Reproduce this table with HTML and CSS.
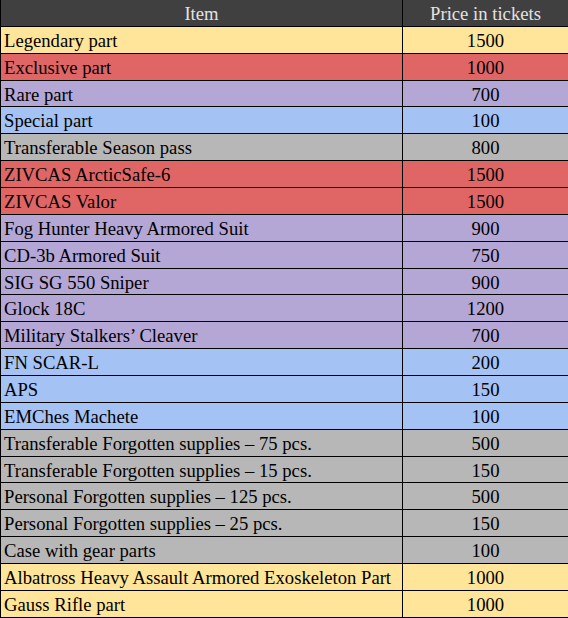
FILE: index.html
```html
<!DOCTYPE html>
<html>
<head>
<meta charset="utf-8">
<link rel="stylesheet" href="styles.css">
</head>
<body>
<table class="prices">
  <colgroup><col class="c-item"><col class="c-price"></colgroup>
  <thead>
    <tr><th>Item</th><th>Price in tickets</th></tr>
  </thead>
  <tbody>
    <tr class="yellow"><td>Legendary part</td><td>1500</td></tr>
    <tr class="red"><td>Exclusive part</td><td>1000</td></tr>
    <tr class="purple"><td>Rare part</td><td>700</td></tr>
    <tr class="blue"><td>Special part</td><td>100</td></tr>
    <tr class="gray"><td>Transferable Season pass</td><td>800</td></tr>
    <tr class="red"><td>ZIVCAS ArcticSafe-6</td><td>1500</td></tr>
    <tr class="red"><td>ZIVCAS Valor</td><td>1500</td></tr>
    <tr class="purple"><td>Fog Hunter Heavy Armored Suit</td><td>900</td></tr>
    <tr class="purple"><td>CD-3b Armored Suit</td><td>750</td></tr>
    <tr class="purple"><td>SIG SG 550 Sniper</td><td>900</td></tr>
    <tr class="purple"><td>Glock 18C</td><td>1200</td></tr>
    <tr class="purple"><td>Military Stalkers’ Cleaver</td><td>700</td></tr>
    <tr class="blue"><td>FN SCAR-L</td><td>200</td></tr>
    <tr class="blue"><td>APS</td><td>150</td></tr>
    <tr class="blue"><td>EMChes Machete</td><td>100</td></tr>
    <tr class="gray"><td>Transferable Forgotten supplies – 75 pcs.</td><td>500</td></tr>
    <tr class="gray"><td>Transferable Forgotten supplies – 15 pcs.</td><td>150</td></tr>
    <tr class="gray"><td>Personal Forgotten supplies – 125 pcs.</td><td>500</td></tr>
    <tr class="gray"><td>Personal Forgotten supplies – 25 pcs.</td><td>150</td></tr>
    <tr class="gray"><td>Case with gear parts</td><td>100</td></tr>
    <tr class="yellow"><td>Albatross Heavy Assault Armored Exoskeleton Part</td><td>1000</td></tr>
    <tr class="yellow"><td>Gauss Rifle part</td><td>1000</td></tr>
  </tbody>
</table>
</body>
</html>
```
FILE: styles.css
```css
html, body {
  margin: 0;
  padding: 0;
  background: #ffffff;
}

.prices {
  width: 568px;
  border-collapse: collapse;
  table-layout: fixed;
  font-family: "Liberation Serif", "Times New Roman", serif;
  font-size: 18.67px;
  color: #000;
}

.c-item { width: 402px; }
.c-price { width: 166px; }

.prices th,
.prices td {
  border: 1px solid #000;
  padding: 3px 3px 1px;
  line-height: 21.86px;
  white-space: nowrap;
  overflow: hidden;
}

.prices th {
  background: #404040;
  color: #e3e3e3;
  font-weight: normal;
  text-align: center;
  border-top: 0;
  border-color: #000;
}

.prices td:first-child { text-align: left; }
.prices td:last-child { text-align: center; }

.yellow td { background: #ffe599; }
.red td { background: #e06666; }
.purple td { background: #b4a7d6; }
.blue td { background: #a4c2f4; }
.gray td { background: #b7b7b7; }
```
